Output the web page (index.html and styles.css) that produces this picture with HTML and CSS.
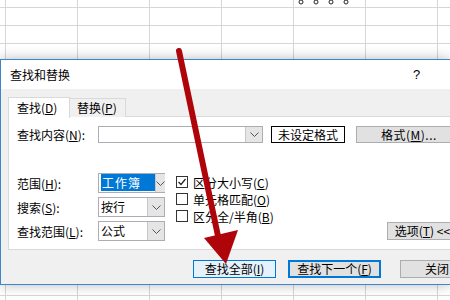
FILE: index.html
```html
<!DOCTYPE html>
<html lang="zh-CN">
<head>
    <meta charset="UTF-8">
    <title>查找和替换</title>
    <link rel="stylesheet" href="styles.css">
</head>
<body>
    <div class="sheet"></div>

    <div class="dialog">
        <div class="titlebar">
            <span class="title">查找和替换</span>
            <span class="help">?</span>
        </div>
        <div class="dialog-body">
            <div class="tabs">
                <div class="tab active">查找(<u>D</u>)</div>
                <div class="tab">替换(<u>P</u>)</div>
            </div>
            <div class="panel">
                <div class="find-row">
                    <label class="label">查找内容(<u>N</u>):</label>
                    <div class="combo wide">
                        <span class="combo-text"></span>
                        <span class="drop"><svg width="9" height="5" viewBox="0 0 9 5"><path d="M0.5 0.5 L4.5 4.5 L8.5 0.5" fill="none" stroke="#555" stroke-width="1"/></svg></span>
                    </div>
                    <div class="preview">未设定格式</div>
                    <button class="btn format">格式(<u>M</u>)...</button>
                </div>

                <div class="options">
                    <div class="fields">
                        <div class="field">
                            <label class="label">范围(<u>H</u>):</label>
                            <div class="combo">
                                <span class="combo-text"><span class="picked">工作簿</span></span>
                                <span class="drop"><svg width="9" height="5" viewBox="0 0 9 5"><path d="M0.5 0.5 L4.5 4.5 L8.5 0.5" fill="none" stroke="#555" stroke-width="1"/></svg></span>
                            </div>
                        </div>
                        <div class="field">
                            <label class="label">搜索(<u>S</u>):</label>
                            <div class="combo">
                                <span class="combo-text">按行</span>
                                <span class="drop"><svg width="9" height="5" viewBox="0 0 9 5"><path d="M0.5 0.5 L4.5 4.5 L8.5 0.5" fill="none" stroke="#555" stroke-width="1"/></svg></span>
                            </div>
                        </div>
                        <div class="field">
                            <label class="label">查找范围(<u>L</u>):</label>
                            <div class="combo">
                                <span class="combo-text">公式</span>
                                <span class="drop"><svg width="9" height="5" viewBox="0 0 9 5"><path d="M0.5 0.5 L4.5 4.5 L8.5 0.5" fill="none" stroke="#555" stroke-width="1"/></svg></span>
                            </div>
                        </div>
                    </div>

                    <div class="checks">
                        <div class="check">
                            <span class="box"><svg width="10" height="10" viewBox="0 0 10 10"><path d="M1.5 5 L4 7.5 L8.5 2" fill="none" stroke="#222" stroke-width="1.2"/></svg></span>
                            <span>区分大小写(<u>C</u>)</span>
                        </div>
                        <div class="check">
                            <span class="box"></span>
                            <span>单元格匹配(<u>O</u>)</span>
                        </div>
                        <div class="check">
                            <span class="box"></span>
                            <span>区分全/半角(<u>B</u>)</span>
                        </div>
                    </div>

                    <button class="btn more">选项(<u>T</u>) &lt;&lt;</button>
                </div>
            </div>

            <div class="actions">
                <button class="btn hot">查找全部(<u>I</u>)</button>
                <button class="btn default">查找下一个(<u>F</u>)</button>
                <button class="btn close">关闭</button>
            </div>
        </div>
    </div>

    <svg class="overlay" width="450" height="300" viewBox="0 0 450 300">
        <!-- selection handles of a shape above -->
        <circle cx="301" cy="2" r="2" fill="#fff" stroke="#222" stroke-width="1"/>
        <circle cx="316" cy="2" r="2" fill="#fff" stroke="#222" stroke-width="1"/>
        <circle cx="331" cy="2" r="2" fill="#fff" stroke="#222" stroke-width="1"/>
        <circle cx="346" cy="2" r="2" fill="#fff" stroke="#222" stroke-width="1"/>
        <!-- red arrow -->
        <line x1="179" y1="51" x2="218" y2="236" stroke="#b0040b" stroke-width="6" stroke-linecap="round"/>
        <polygon points="204,238 238,230 226,264" fill="#b0040b"/>
    </svg>
</body>
</html>
```

FILE: styles.css
```css
body {
    margin: 0;
    width: 450px;
    height: 300px;
    overflow: hidden;
    position: relative;
    font-family: "Noto Sans CJK SC", "Microsoft YaHei", sans-serif;
    font-size: 12px;
    color: #000;
    background: #fff;
}
.sheet {
    height: 300px;
    background-color: #fff;
    background-image:
        linear-gradient(to right, #d6d6d6 1px, transparent 1px),
        linear-gradient(to bottom, #d6d6d6 1px, transparent 1px);
    background-size: 72px 100%, 100% 18px;
    background-position: 5px 0, 0 7px;
}
/* window cut off by the right edge of the screen */
.dialog {
    position: absolute;
    left: 0;
    top: 59px;
    width: 449px;
    height: 224px;
    overflow: hidden;
    background: #f0f0f0;
    border: 1px solid #3d86cc;
    border-right: none;
    box-shadow: 0 0 12px rgba(0, 0, 0, 0.28);
}
.titlebar {
    height: 29px;
    background: #fff;
    display: flex;
    align-items: center;
    padding-left: 9px;
}
.title {
    font-size: 12px;
    line-height: 14px;
}
.help {
    margin-left: 343px;
    font-family: "Liberation Sans", sans-serif;
    font-size: 13px;
}
.dialog-body {
    padding: 8px 0 0 7px;
    width: 520px;
}
.tabs {
    display: flex;
    height: 19px;
}
.tab {
    height: 19px;
    line-height: 19px;
    padding: 0 0 0 8px;
    width: 48px;
    background: #f0f0f0;
    border: 1px solid #d9d9d9;
    border-bottom: none;
}
.tab + .tab {
    margin-left: -1px;
    width: 48px;
    border-left: none;
    height: 18px;
    margin-top: 1px;
    line-height: 18px;
}
.tab.active {
    background: #fff;
    height: 20px;
    position: relative;
    z-index: 1;
    width: 52px;
}
.panel {
    height: 123px;
    background: #fff;
    border: 1px solid #d9d9d9;
    padding: 9px 0 0 8px;
}
.label {
    width: 81px;
    flex-shrink: 0;
    white-space: nowrap;
}
.find-row {
    display: flex;
    align-items: center;
    height: 17px;
}
.combo {
    display: flex;
    width: 67px;
    height: 20px;
    box-sizing: border-box;
    border: 1px solid #abadb3;
    background: #fff;
}
.combo.wide {
    width: 165px;
    height: 17px;
}
.combo-text {
    flex: 1;
    padding: 2px 0 0 2px;
    line-height: 14px;
    white-space: nowrap;
}
.picked {
    background: #0078d7;
    color: #fff;
    padding: 0 14px 0 1px;
    letter-spacing: 1px;
}
.drop {
    width: 16px;
    background: #e5e5e5;
    border-left: 1px solid #c8c8c8;
    display: flex;
    align-items: center;
    justify-content: center;
}
.preview {
    margin-left: 8px;
    width: 72px;
    height: 15px;
    border: 1px solid #000;
    line-height: 15px;
    text-align: center;
}
.btn {
    font-family: inherit;
    font-size: 12px;
    height: 18px;
    padding: 0;
    background: #e1e1e1;
    border: 1px solid #adadad;
    color: #000;
    line-height: 14px;
    white-space: nowrap;
}
.format {
    margin-left: 11px;
    width: 120px;
    height: 17px;
    text-align: left;
    padding-left: 24px;
    letter-spacing: 0.5px;
}
.options {
    display: flex;
    margin-top: 30px;
}
.fields {
    display: flex;
    flex-direction: column;
    gap: 4px;
}
.field {
    display: flex;
    align-items: center;
}
.checks {
    margin-left: 11px;
    margin-top: 3px;
    display: flex;
    flex-direction: column;
    gap: 5px;
}
.check {
    display: flex;
    align-items: center;
    height: 12px;
    gap: 5px;
}
.box {
    width: 10px;
    height: 10px;
    border: 1px solid #333;
    background: #fff;
    display: flex;
    align-items: center;
    justify-content: center;
}
.more {
    align-self: flex-end;
    margin-left: 113px;
    margin-bottom: 1px;
    width: 80px;
    text-align: left;
    padding-left: 7px;
}
.actions {
    display: flex;
    margin: 10px 0 0 185px;
}
.hot {
    width: 83px;
    background: #e5f1fb;
    border-color: #0078d7;
}
.default {
    margin-left: 12px;
    width: 93px;
    border: 2px solid #0078d7;
}
.close {
    margin-left: 19px;
    width: 80px;
    text-align: left;
    padding-left: 24px;
}
.overlay {
    position: absolute;
    left: 0;
    top: 0;
    pointer-events: none;
}
```
